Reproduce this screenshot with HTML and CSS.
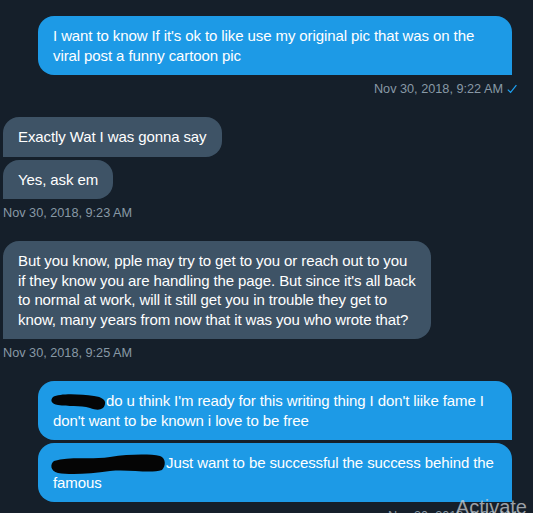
FILE: index.html
```html
<!DOCTYPE html>
<html lang="en">
<head>
<meta charset="utf-8">
<title>Messages</title>
<link rel="stylesheet" href="styles.css">
</head>
<body>
<div class="thread">
  <div class="group sent">
    <div class="bubble">I want to know If it's ok to like use my original pic that was on the viral post a funny cartoon pic</div>
    <div class="meta">Nov 30, 2018, 9:22 AM <svg class="check" viewBox="0 0 10 10" width="10" height="10"><path d="M0.8 5.6 L3.6 8.4 L9.4 1.2" fill="none" stroke="#1da1f2" stroke-width="1.2"/></svg></div>
  </div>

  <div class="group received">
    <div class="bubble">Exactly Wat I was gonna say</div>
    <div class="bubble">Yes, ask em</div>
    <div class="meta">Nov 30, 2018, 9:23 AM</div>
  </div>

  <div class="group received">
    <div class="bubble">But you know, pple may try to get to you or reach out to you<br>if they know you are handling the page. But since it's all back<br>to normal at work, will it still get you in trouble they get to<br>know, many years from now that it was you who wrote that?</div>
    <div class="meta">Nov 30, 2018, 9:25 AM</div>
  </div>

  <div class="group sent">
    <div class="bubble"><span class="redact"><svg viewBox="0 0 56 20" width="56" height="20"><path d="M3 5 C10 1 30 2 44 4 C52 5 56 8 55 12 C54 18 48 19 40 16 C30 13 18 15 8 13 C1 12 0 8 3 5 Z" fill="#050505"/></svg></span>do u think I'm ready for this writing thing I don't liike fame I<br>don't want to be known i love to be free</div>
    <div class="bubble"><span class="redact"><svg viewBox="0 0 116 24" width="116" height="24"><path d="M4 9 C20 4 40 8 60 5 C80 2 100 2 110 4 C116 6 116 14 112 18 C100 22 80 17 60 19 C40 22 20 23 8 21 C0 19 0 12 4 9 Z" fill="#050505"/></svg></span>Just want to be successful the success behind the<br>famous</div>
    <div class="meta">Nov 30, 2018, 9:26 AM</div>
  </div>
</div>
<div class="watermark">Activate</div>
</body>
</html>
```

FILE: styles.css
```css
html, body {
  margin: 0;
  padding: 0;
  background: #151f2a;
  height: 100%;
  overflow: hidden;
}

body {
  font-family: "Liberation Sans", Arial, sans-serif;
  color: #ffffff;
  position: relative;
}

.thread {
  display: flex;
  flex-direction: column;
  gap: 20px;
  padding: 16px 21px 0 3px;
}

.group {
  display: flex;
  flex-direction: column;
  gap: 3px;
}

.sent {
  align-items: flex-end;
  padding-left: 35px;
}

.received {
  align-items: flex-start;
}

.bubble {
  font-size: 15px;
  line-height: 19.5px;
  padding: 10px 15px 10px 15px;
  border-radius: 16px;
  letter-spacing: -0.1px;
  white-space: nowrap;
}

.sent .bubble {
  background: #1d9ae6;
  border-bottom-right-radius: 0;
  width: 444px;
  white-space: normal;
}

.received .bubble {
  background: #3e5366;
  border-bottom-left-radius: 0;
}

.meta {
  margin-top: 3px;
  font-size: 12.7px;
  line-height: 16px;
  color: #8899a6;
  display: flex;
  align-items: center;
  gap: 4px;
}

.sent .meta {
  margin-right: -5px;
}

.check {
  display: block;
}

.redact {
  display: inline-block;
  vertical-align: middle;
  margin: -4px 0 -4px -3px;
}

.redact svg {
  display: block;
}

.watermark {
  position: absolute;
  right: 6px;
  bottom: -6px;
  font-family: "Liberation Sans", Arial, sans-serif;
  font-size: 20px;
  color: rgba(200, 205, 210, 0.75);
}
```
